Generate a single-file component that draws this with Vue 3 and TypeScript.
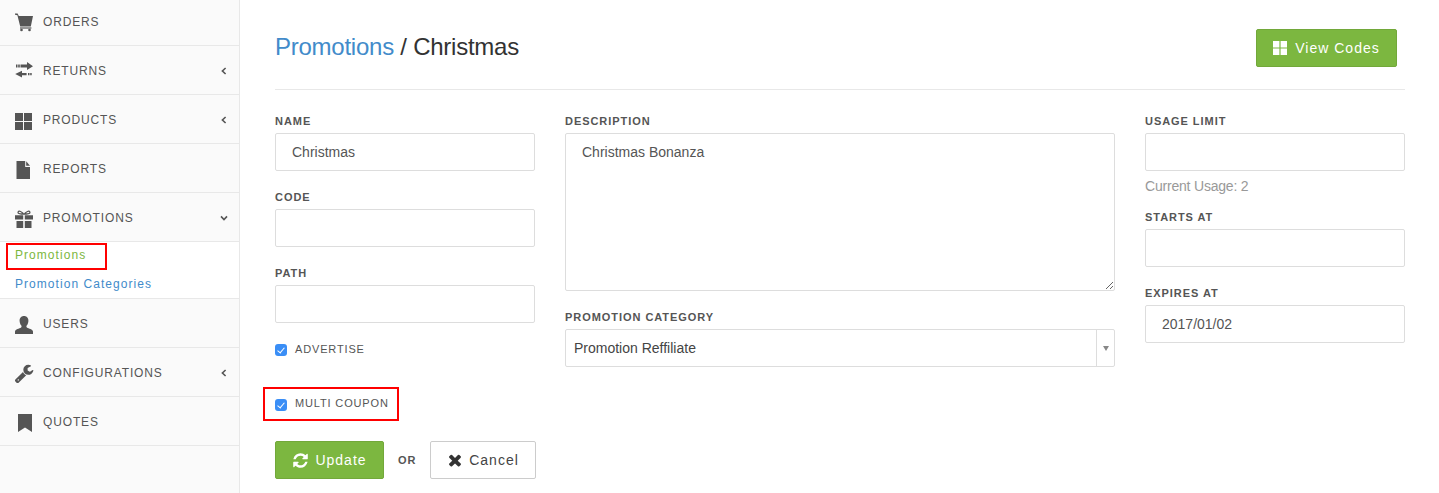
<script setup lang="ts">
import { ref } from 'vue'

type NavItem = {
  label: string
  icon: string
  caret?: 'left' | 'down'
  children?: { label: string; boxed?: boolean }[]
}

const navItems = ref<NavItem[]>([
  { label: 'Orders', icon: 'cart' },
  { label: 'Returns', icon: 'transfer', caret: 'left' },
  { label: 'Products', icon: 'grid', caret: 'left' },
  { label: 'Reports', icon: 'file' },
  {
    label: 'Promotions',
    icon: 'gift',
    caret: 'down',
    children: [{ label: 'Promotions', boxed: true }, { label: 'Promotion Categories' }]
  },
  { label: 'Users', icon: 'user' },
  { label: 'Configurations', icon: 'wrench', caret: 'left' },
  { label: 'Quotes', icon: 'bookmark' }
])

const name = ref('Christmas')
const description = ref('Christmas Bonanza')
const expiresAt = ref('2017/01/02')
const advertise = ref(true)
const multiCoupon = ref(true)
</script>

<template>
  <div class="page">
    <aside class="sidebar">
      <ul class="nav">
        <li v-for="item in navItems" :key="item.label">
          <a class="nav-row">
            <svg class="nav-icon" viewBox="0 0 20 20">
              <g v-if="item.icon === 'cart'">
                <path d="M1 1.500h2.600l1.200 2.500H19l-2.200 10.500H6.200L3.400 3.200 1 2.800z" />
                <path d="M6 15.400h11.400v1.200H6z" />
                <circle cx="7.500" cy="18" r="1.300" />
                <circle cx="15.500" cy="18" r="1.300" />
              </g>
              <g v-else-if="item.icon === 'transfer'">
                <path d="M13 3.600V1l6 4.200-6 3.800V6.400H6.500V3.600z" />
                <path d="M2 3.600h1.500v2.800H2zM4.200 3.600h1.600v2.800H4.200z" />
                <path d="M8 12v-2.200L1.200 13 8 16.600v-2.300h4.600V12z" />
                <path d="M14 12h1.500v2.300H14zM16.200 12h1.500v2.300h-1.500z" />
              </g>
              <g v-else-if="item.icon === 'grid'">
                <path d="M1 3h8v8H1zM10 3h8v8h-8zM1 12h8v8H1zM10 12h8v8h-8z" />
              </g>
              <g v-else-if="item.icon === 'file'">
                <path d="M2.500 2h8.700v6H16v12H2.500z" />
                <path d="M12.200 2.200l3.800 4.600h-3.800z" />
              </g>
              <g v-else-if="item.icon === 'gift'">
                <path d="M1 7.200h8.200v4.300H1zM10.800 7.200H19v4.300h-8.200zM2.500 13h6.700v7H2.500zM10.800 13h6.700v7h-6.700z" />
                <path fill-rule="evenodd" d="M10 6.800C8 6.600 4.400 6.700 3.600 5.200 3 3.800 4 2.200 5.400 2.400 7.200 2.600 9 4.200 10 5.400 11 4.200 12.800 2.600 14.600 2.400c1.400-.2 2.400 1.400 1.800 2.800-.8 1.500-4.400 1.400-6.400 1.600zM5.400 3.800c-.8 0-.9.9-.3 1.200.8.300 2 .3 3 .3-.8-.7-1.700-1.500-2.700-1.500zM14.600 3.800c-1 0-1.900.8-2.700 1.500 1 0 2.200 0 3-.3.600-.3.500-1.200-.3-1.200z" />
              </g>
              <g v-else-if="item.icon === 'user'">
                <path d="M10 2c2.900 0 4.600 2.200 4.400 5-.1 1.800-.7 3.400-1.700 4.600-.4.500-.4 1.500.2 1.900 1.800 1.100 5.800 1.700 6.100 3.900V20H1v-2.600c.3-2.200 4.300-2.800 6.100-3.900.6-.4.600-1.400.2-1.900C6.300 10.400 5.700 8.800 5.600 7 5.400 4.200 7.100 2 10 2z" />
              </g>
              <g v-else-if="item.icon === 'wrench'" transform="translate(0 .4) scale(0.0112)">
                <path d="M448 1472q0-26-19-45t-45-19-45 19-19 45 19 45 45 19 45-19 19-45zm644-420l-682 682q-37 37-90 37-52 0-91-37l-106-108q-38-36-38-90 0-53 38-91l681-681q39 98 114.5 173.5t173.5 114.5zm634-435q0 39-23 106-47 134-164.5 217.5t-258.5 83.5q-185 0-316.5-131.5t-131.5-316.5 131.5-316.5 316.5-131.5q58 0 121.5 16.5t107.5 46.5q16 11 16 28t-16 28l-293 169v224l193 107q5-3 79-48.5t135.5-81 70.5-35.5q15 0 23.5 10t8.5 25z" />
              </g>
              <g v-else>
                <path d="M4 2h14v18l-7-4.400L4 20z" />
              </g>
            </svg>
            <span class="nav-label">{{ item.label }}</span>
            <svg v-if="item.caret === 'left'" class="caret" viewBox="0 0 8 8">
              <path d="M5.600 1L2.400 4l3.200 3" />
            </svg>
            <svg v-if="item.caret === 'down'" class="caret" viewBox="0 0 8 8">
              <path d="M1 2.400L4 5.600l3-3.200" />
            </svg>
          </a>
          <ul v-if="item.children" class="subnav">
            <li v-for="child in item.children" :key="child.label">
              <a class="sub-link" :class="{ boxed: child.boxed }">{{ child.label }}</a>
            </li>
          </ul>
        </li>
      </ul>
    </aside>

    <main class="content">
      <header class="head">
        <h1><a>Promotions</a> / Christmas</h1>
        <button class="btn btn-green view-codes" type="button">
          <svg class="btn-icon" viewBox="0 0 14 14">
            <path d="M0 0h6.400v6.400H0zM7.600 0H14v6.400H7.600zM0 7.600h6.400V14H0zM7.600 7.600H14V14H7.600z" />
          </svg>
          View Codes
        </button>
      </header>

      <form class="form" @submit.prevent>
        <div class="col col-side">
          <div class="field">
            <label>Name</label>
            <input v-model="name" type="text" />
          </div>
          <div class="field">
            <label>Code</label>
            <input type="text" />
          </div>
          <div class="field">
            <label>Path</label>
            <input type="text" />
          </div>
          <div class="check">
            <input v-model="advertise" type="checkbox" />
            <span>Advertise</span>
          </div>
          <div class="check check-boxed">
            <input v-model="multiCoupon" type="checkbox" />
            <span>Multi Coupon</span>
          </div>
          <div class="actions">
            <button class="btn btn-green update" type="submit">
              <svg class="btn-icon" viewBox="0 0 1792 1792">
                <path d="M1639 1056q0 5-1 7-64 268-268 434.5t-478 166.5q-146 0-282.5-55t-243.5-157l-129 129q-19 19-45 19t-45-19-19-45v-448q0-26 19-45t45-19h448q26 0 45 19t19 45-19 45l-137 137q71 66 161 102t187 36q134 0 250-65t186-179q11-17 53-117 8-23 30-23h192q13 0 22.5 9.5t9.5 22.5zm25-800v448q0 26-19 45t-45 19h-448q-26 0-45-19t-19-45 19-45l138-138q-148-137-349-137-134 0-250 65t-186 179q-11 17-53 117-8 23-30 23h-199q-13 0-22.5-9.5t-9.5-22.5v-7q65-268 270-434.5t480-166.5q146 0 284 55.5t245 156.5l130-129q19-19 45-19t45 19 19 45z" />
              </svg>
              Update
            </button>
            <span class="or">OR</span>
            <button class="btn btn-plain" type="button">
              <svg class="btn-icon" viewBox="0 0 1792 1792">
                <path d="M1490 1322q0 40-28 68l-136 136q-28 28-68 28t-68-28l-294-294-294 294q-28 28-68 28t-68-28l-136-136q-28-28-28-68t28-68l294-294-294-294q-28-28-28-68t28-68l136-136q28-28 68-28t68 28l294 294 294-294q28-28 68-28t68 28l136 136q28 28 28 68t-28 68l-294 294 294 294q28 28 28 68z" />
              </svg>
              Cancel
            </button>
          </div>
        </div>

        <div class="col col-main">
          <div class="field">
            <label>Description</label>
            <textarea v-model="description"></textarea>
          </div>
          <div class="field">
            <label>Promotion Category</label>
            <div class="select">
              <span class="select-value">Promotion Reffiliate</span>
              <span class="select-arrow"><i></i></span>
            </div>
          </div>
        </div>

        <div class="col col-side">
          <div class="field">
            <label>Usage Limit</label>
            <input type="text" />
            <p class="hint">Current Usage: 2</p>
          </div>
          <div class="field">
            <label>Starts At</label>
            <input type="text" />
          </div>
          <div class="field">
            <label>Expires At</label>
            <input v-model="expiresAt" type="text" />
          </div>
        </div>
      </form>
    </main>
  </div>
</template>

<style>
html,
body {
  margin: 0;
  background: #fff;
  overflow: hidden;
}
</style>

<style scoped>
.page {
  display: flex;
  height: 493px;
  overflow: hidden;
  font-family: 'Liberation Sans', Arial, sans-serif;
  color: #555;
}
.sidebar {
  width: 239px;
  flex: none;
  background: #fafafa;
  border-right: 1px solid #e8e8e8;
}
.nav {
  list-style: none;
  margin: -3px 0 0;
  padding: 0;
}
.nav-row {
  display: flex;
  align-items: center;
  height: 49px;
  box-sizing: border-box;
  padding: 2px 11px 0 14px;
  border-bottom: 1px solid #e8e8e8;
  font-size: 12px;
  letter-spacing: 0.85px;
  text-transform: uppercase;
  color: #555;
}
.nav-icon {
  width: 20px;
  height: 20px;
  margin-right: 9px;
  fill: #555;
  flex: none;
}
.nav-label {
  flex: 1;
}
.caret {
  width: 8px;
  height: 8px;
  fill: none;
  stroke: #555;
  stroke-width: 1.6;
}
.subnav {
  list-style: none;
  margin: 0;
  padding: 1px 0 0;
  background: #fff;
  height: 55px;
  border-bottom: 1px solid #e8e8e8;
}
.sub-link {
  display: block;
  padding-left: 15px;
  margin-top: 4px;
  font-size: 12px;
  line-height: 20px;
  letter-spacing: 1.05px;
  color: #428bca;
}
.sub-link.boxed {
  width: 101px;
  height: 27px;
  box-sizing: border-box;
  margin: 0 0 0 6px;
  padding-left: 7px;
  border: 2px solid #f00;
  line-height: 21px;
  color: #7cb740;
}
.content {
  flex: 1;
  padding: 0 34px 0 35px;
}
.head {
  display: flex;
  justify-content: space-between;
  align-items: center;
  height: 84px;
  padding: 5px 8px 0 0;
  border-bottom: 1px solid #e8e8e8;
}
.head h1 {
  margin: 0;
  font-size: 24px;
  font-weight: 400;
  letter-spacing: -0.25px;
  color: #333;
}
.head h1 a {
  color: #428bca;
}
.btn {
  display: inline-flex;
  align-items: center;
  justify-content: center;
  flex: none;
  gap: 8px;
  height: 38px;
  box-sizing: border-box;
  border-radius: 2px;
  font-family: inherit;
  font-size: 14px;
  letter-spacing: 1px;
  padding: 0;
}
.btn-icon {
  width: 14px;
  height: 14px;
  fill: currentColor;
}
.btn-green {
  border: 1px solid #72a83a;
  background: #7cb740;
  color: #fff;
}
.view-codes {
  width: 141px;
  margin-top: 2px;
}
.update {
  width: 109px;
  gap: 6px;
}
.update .btn-icon {
  width: 17px;
  height: 17px;
}
.btn-plain {
  width: 106px;
  gap: 5px;
  border: 1px solid #ccc;
  background: #fff;
  color: #444;
}
.btn-plain .btn-icon {
  width: 18px;
  height: 18px;
  color: #333;
}
.form {
  display: flex;
  gap: 30px;
  padding-top: 24px;
}
.col-side {
  width: 260px;
  flex: none;
}
.col-main {
  flex: 1;
}
.field {
  margin-bottom: 19px;
}
.field label {
  display: block;
  margin-bottom: 5px;
  font-size: 11px;
  line-height: 14px;
  font-weight: 700;
  letter-spacing: 0.95px;
  text-transform: uppercase;
  color: #555;
}
input[type='text'],
textarea {
  display: block;
  width: 100%;
  height: 38px;
  box-sizing: border-box;
  padding: 0 16px;
  border: 1px solid #ddd;
  border-radius: 2px;
  font-family: inherit;
  font-size: 14px;
  color: #555;
  outline: none;
}
textarea {
  height: 158px;
  padding: 10px 16px;
}
.select {
  display: flex;
  height: 38px;
  box-sizing: border-box;
  border: 1px solid #ddd;
  border-radius: 2px;
  font-size: 14px;
  color: #444;
}
.select-value {
  flex: 1;
  padding-left: 8px;
  line-height: 36px;
}
.select-arrow {
  display: flex;
  align-items: center;
  justify-content: center;
  width: 17px;
  border-left: 1px solid #ddd;
}
.select-arrow i {
  width: 0;
  height: 0;
  border-left: 3px solid transparent;
  border-right: 3px solid transparent;
  border-top: 5px solid #888;
}
.hint {
  margin: 7px 0 -3px;
  font-size: 14px;
  line-height: 16px;
  letter-spacing: -0.2px;
  color: #999;
}
.check {
  display: flex;
  align-items: center;
  gap: 8px;
  height: 16px;
  margin-top: -1px;
  font-size: 11px;
  letter-spacing: 0.85px;
  text-transform: uppercase;
  color: #555;
}
.check input {
  appearance: none;
  width: 12px;
  height: 12px;
  margin: 2px 0 0;
  border-radius: 3px;
  background: #3a8ef6;
  position: relative;
}
.check input:checked::after {
  content: '';
  position: absolute;
  left: 4px;
  top: 2px;
  width: 3px;
  height: 6px;
  border: solid #fff;
  border-width: 0 1.5px 1.5px 0;
  transform: rotate(40deg);
}
.check-boxed {
  width: 136px;
  height: 34px;
  box-sizing: border-box;
  margin: 30px 0 20px -12px;
  padding: 0 0 2px 10px;
  border: 2px solid #f00;
}
.check-boxed input {
  margin-top: 4px;
}
.actions {
  display: flex;
  align-items: center;
}
.or {
  margin: 0 13px 0 14px;
  font-size: 11px;
  font-weight: 700;
  letter-spacing: 1px;
}
</style>
